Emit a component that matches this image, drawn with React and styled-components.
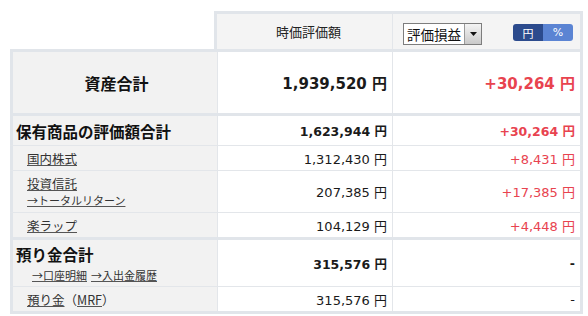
import styled, { createGlobalStyle } from "styled-components";

const GlobalStyle = createGlobalStyle`
  * { box-sizing: border-box; }
  body {
    margin: 0;
    background: #fff;
    color: #222;
    font-family: "DejaVu Sans", "Noto Sans CJK JP", sans-serif;
  }
`;

const LINE = "#e1e5ea";
const THIN = "#e3e6ea";
const RED = "#e8434f";

const rows = [
  { kind: "group", label: "保有商品の評価額合計", value: "1,623,944", diff: "+30,264", height: 29, top: 3 },
  { kind: "item", label: "国内株式", value: "1,312,430", diff: "+8,431", height: 24, top: 1 },
  { kind: "item", label: "投資信託", sub: ["→トータルリターン"], value: "207,385", diff: "+17,385", height: 41, top: 1 },
  { kind: "item", label: "楽ラップ", value: "104,129", diff: "+4,448", height: 24, top: 1 },
  { kind: "group", label: "預り金合計", sub: ["→口座明細", "→入出金履歴"], value: "315,576", diff: "-", height: 46, top: 3 },
  { kind: "mrf", value: "315,576", diff: "-", height: 24, top: 1, last: true },
];

const App = () => {
  return (
    <>
      <GlobalStyle />
      <St.Page>
        <St.Table>
          <St.HeadRow>
            <div />
            <St.HeadCell $first>時価評価額</St.HeadCell>
            <St.HeadCell $last>
              <St.Select>
                <span>評価損益</span>
                <St.SelectArrow>
                  <svg width="7" height="4" viewBox="0 0 7 4">
                    <path d="M0 0h7L3.5 4z" fill="#111" />
                  </svg>
                </St.SelectArrow>
              </St.Select>
              <St.Toggle>
                <St.ToggleItem $active>円</St.ToggleItem>
                <St.ToggleItem>%</St.ToggleItem>
              </St.Toggle>
            </St.HeadCell>
          </St.HeadRow>

          <St.Row $top={3} $height={61}>
            <St.Label $center>
              <St.TotalTitle>資産合計</St.TotalTitle>
            </St.Label>
            <St.Value $size={15} $bold>
              1,939,520 円
            </St.Value>
            <St.Value $size={15} $bold $red $end>
              +30,264 円
            </St.Value>
          </St.Row>

          {rows.map((row, i) => (
            <St.Row key={i} $top={row.top} $height={row.height} $last={row.last}>
              <St.Label $indent={row.kind !== "group"}>
                {row.kind === "group" && <St.GroupTitle>{row.label}</St.GroupTitle>}
                {row.kind === "item" && <St.Link>{row.label}</St.Link>}
                {row.kind === "mrf" && (
                  <St.Plain>
                    <St.Link>預り金</St.Link>（<St.Link>MRF</St.Link>）
                  </St.Plain>
                )}
                {row.sub && (
                  <St.SubLinks $group={row.kind === "group"}>
                    {row.sub.map((s) => (
                      <St.SmallLink key={s}>{s}</St.SmallLink>
                    ))}
                  </St.SubLinks>
                )}
              </St.Label>
              <St.Value $size={row.kind === "group" ? 12.5 : 13} $bold={row.kind === "group"}>
                {row.value} 円
              </St.Value>
              <St.Value
                $size={row.kind === "group" ? 12.5 : 13}
                $bold={row.kind === "group"}
                $red={row.diff !== "-"}
                $end
              >
                {row.diff === "-" ? "-" : `${row.diff} 円`}
              </St.Value>
            </St.Row>
          ))}
        </St.Table>
      </St.Page>
    </>
  );
};

export default App;

const St = {
  Page: styled.div`
    padding: 11px 0 0 10px;
    width: 588px;
    height: 316px;
    overflow: hidden;
  `,
  Table: styled.div`
    display: flex;
    flex-direction: column;
    width: 573px;
  `,
  HeadRow: styled.div`
    display: grid;
    grid-template-columns: 204px 178px 191px;
    height: 38px;
  `,
  HeadCell: styled.div`
    display: flex;
    align-items: center;
    justify-content: ${({ $first }) => ($first ? "center" : "space-between")};

    padding: ${({ $first }) => ($first ? "0 0 0 8px" : "2px 7px 0 10px")};

    font-family: "Noto Sans CJK JP", sans-serif;
    font-size: 13px;
    color: #222;
    background: #f4f4f4;
    border-top: 3px solid ${LINE};
    border-left: ${({ $first }) => ($first ? `3px solid ${LINE}` : `1px solid ${THIN}`)};
    border-right: ${({ $last }) => ($last ? `3px solid ${LINE}` : "none")};
  `,
  Select: styled.div`
    display: flex;
    align-items: stretch;

    width: 79px;
    height: 22px;
    margin-top: 2px;

    background: #fff;
    border: 1px solid #7d7d7d;

    > span {
      display: flex;
      align-items: center;
      flex: 1;
      padding-left: 3px;
      font-size: 13.5px;
      color: #111;
    }
  `,
  SelectArrow: styled.div`
    display: flex;
    align-items: center;
    justify-content: center;

    width: 17px;
    background: linear-gradient(#f4f4f4, #c9c9c9);
    border-left: 1px solid #9a9a9a;
  `,
  Toggle: styled.div`
    display: flex;
    overflow: hidden;

    height: 17px;
    border-radius: 3px;
  `,
  ToggleItem: styled.span`
    display: flex;
    align-items: center;
    justify-content: center;

    width: 30px;

    font-family: "DejaVu Sans", "Noto Sans CJK JP", sans-serif;
    font-size: 11px;
    color: #fff;
    background: ${({ $active }) => ($active ? "#2c4b8d" : "#5b84d3")};
  `,
  Row: styled.div`
    display: grid;
    grid-template-columns: 207px 175px 191px;
    height: ${({ $top, $height, $last }) => $top + $height + ($last ? 3 : 0)}px;

    border-top: ${({ $top }) => `${$top}px solid ${$top === 3 ? LINE : THIN}`};
    border-bottom: ${({ $last }) => ($last ? `3px solid ${LINE}` : "none")};
  `,
  Label: styled.div`
    display: flex;
    flex-direction: column;
    justify-content: center;
    align-items: ${({ $center }) => ($center ? "center" : "flex-start")};

    padding: ${({ $indent }) => ($indent ? "0 0 0 14px" : "0 0 0 3px")};

    background: #f2f2f2;
    border-left: 3px solid ${LINE};
  `,
  TotalTitle: styled.span`
    font-family: "Noto Sans CJK JP", sans-serif;
    font-size: 16px;
    font-weight: 700;
    color: #111;
  `,
  GroupTitle: styled.span`
    font-family: "Noto Sans CJK JP", sans-serif;
    font-size: 15.5px;
    font-weight: 700;
    line-height: 20px;
    color: #111;
  `,
  Plain: styled.span`
    font-family: "Noto Sans CJK JP", sans-serif;
    font-size: 12.5px;
    color: #333;
  `,
  Link: styled.span`
    font-family: "Noto Sans CJK JP", sans-serif;
    font-size: 12.5px;
    line-height: 17px;
    color: #333;
    text-decoration: underline;
    text-decoration-color: #555;
  `,
  SubLinks: styled.div`
    display: flex;
    gap: 4px;
    margin-top: ${({ $group }) => ($group ? "4px" : "1px")};
    padding-left: ${({ $group }) => ($group ? "16px" : "0")};
  `,
  SmallLink: styled.span`
    font-family: "Noto Sans CJK JP", sans-serif;
    font-size: 11px;
    line-height: 15px;
    color: #333;
    text-decoration: underline;
    text-decoration-color: #555;
  `,
  Value: styled.div`
    display: flex;
    align-items: center;
    justify-content: flex-end;

    padding-right: 5px;

    font-family: "DejaVu Sans", "Noto Sans CJK JP", sans-serif;
    font-size: ${({ $size }) => $size}px;
    font-weight: ${({ $bold }) => ($bold ? 700 : 400)};
    color: ${({ $red }) => ($red ? RED : "#1a1a1a")};
    background: #fff;
    border-left: 1px solid ${THIN};
    border-right: ${({ $end }) => ($end ? `3px solid ${LINE}` : "none")};
    white-space: nowrap;
  `,
};
